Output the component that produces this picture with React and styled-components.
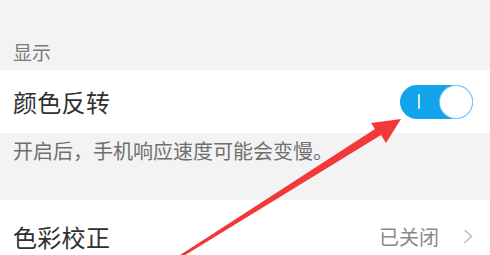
import React from 'react';
import styled, { createGlobalStyle } from 'styled-components'

const GlobalStyle = createGlobalStyle`
    html, body {
        margin: 0;
        padding: 0;
        background: #f3f3f3;
    }
    body {
        font-family: 'Noto Sans CJK SC', 'Noto Sans', sans-serif;
    }
`

const Page = styled.div`
    position: relative;
    width: 490px;
    height: 255px;
    overflow: hidden;
    background: #f3f3f3;
`

const SectionTitle = styled.div`
    padding: 40px 13px 6px;
    font-size: 19px;
    line-height: 24px;
    color: #7a7a7a;
`

const Row = styled.div`
    display: flex;
    align-items: center;
    justify-content: space-between;
    height: ${props => props.height}px;
    padding: 0 17px 0 13px;
    background: #fff;
`

const Label = styled.span`
    font-size: 24px;
    color: #303030;
    letter-spacing: 0.3px;
`

const Hint = styled.div`
    padding: 6px 13px 37px;
    font-size: 20px;
    line-height: 24px;
    color: #6f6f6f;
`

const Toggle = styled.span`
    display: flex;
    align-items: center;
    justify-content: space-between;
    box-sizing: border-box;
    width: 73px;
    height: 34px;
    padding: 1px 1px 1px 18px;
    border-radius: 17px;
    background: #14a4ec;
`

const OnMark = styled.span`
    width: 2px;
    height: 15px;
    border-radius: 1px;
    background: #d6f0fd;
`

const Knob = styled.span`
    width: 32px;
    height: 32px;
    border-radius: 50%;
    background: #fff;
    box-shadow: 0 0 0 1px #7fcdf4;
`

const Value = styled.span`
    display: flex;
    align-items: center;
    gap: 24px;
    font-size: 20px;
    color: #8a8a8a;
`

const Chevron = styled.svg`
    width: 10px;
    height: 15px;
`

const Annotation = styled.svg`
    position: absolute;
    left: 0;
    top: 0;
    pointer-events: none;
`

function App () {

    return(
        <Page>
            <GlobalStyle />
            <SectionTitle>显示</SectionTitle>
            <Row height={63}>
                <Label>颜色反转</Label>
                <Toggle>
                    <OnMark />
                    <Knob />
                </Toggle>
            </Row>
            <Hint>开启后，手机响应速度可能会变慢。</Hint>
            <Row height={72}>
                <Label>色彩校正</Label>
                <Value>
                    已关闭
                    <Chevron viewBox="0 0 10 15">
                        <path d="M1.5 1 L8.5 7.5 L1.5 14" fill="none" stroke="#bdbdbd" strokeWidth="1.6" />
                    </Chevron>
                </Value>
            </Row>
            <Annotation width="490" height="255" viewBox="0 0 490 255">
                <polygon
                    points="401,119 386,143 381,135 182,257 177,257 375,129 371,123"
                    fill="#f23838"
                />
            </Annotation>
        </Page>
    )
}

export default App;
